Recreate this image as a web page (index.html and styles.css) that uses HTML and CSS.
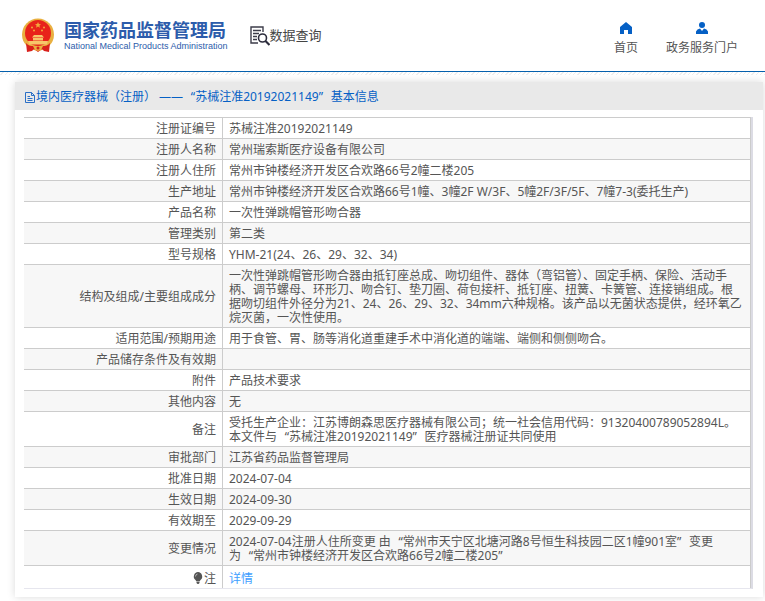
FILE: index.html
```html
<!DOCTYPE html>
<html lang="zh-CN">
<head>
    <meta charset="UTF-8">
    <meta name="viewport" content="width=device-width, initial-scale=1.0">
    <title>国家药品监督管理局 数据查询</title>
    <link rel="stylesheet" href="styles.css">
</head>
<body>
    <header class="header">
        <a class="logo" href="#">
            <svg class="emblem" viewBox="0 0 32 36" aria-hidden="true">
                <circle cx="16" cy="16.500" r="16" fill="#e9b040"/>
                <circle cx="16" cy="15" r="13" fill="#e8231a"/>
                <path d="M16 4l.9 2 2.100.2-1.600 1.400.5 2.100-1.900-1.100-1.900 1.100.5-2.100-1.600-1.400 2.100-.2z" fill="#f3a93c"/>
                <g fill="#f3a93c">
                    <circle cx="10" cy="9.500" r="1"/>
                    <circle cx="12" cy="12.500" r="1"/>
                    <circle cx="20" cy="12.500" r="1"/>
                    <circle cx="22" cy="9.500" r="1"/>
                </g>
                <path d="M12 17h8l2 2.500H10zM11 20h10v2.500H11zM6 23h20l-1 3.500H7z" fill="#f7c66a"/>
                <path d="M4 25c3 4 7 3 12 3s9 1 12-3l-1 9-5-1-2-2-4 3-4-3-2 2-5 1z" fill="#d9201c"/>
                <path d="M11 28h10l-2 4-3 1-3-1z" fill="#e9b040"/>
                <circle cx="16" cy="30" r="1.500" fill="#d9201c"/>
            </svg>
            <span class="logo-text">
                <span class="logo-cn">国家药品监督管理局</span>
                <span class="logo-en">National Medical Products Administration</span>
            </span>
        </a>
        <a class="search-title" href="#">
            <svg class="search-icon" viewBox="0 0 20 20" aria-hidden="true">
                <path d="M13 6V1H1v16h7M3 4.5h8M3 7.5h6M3 10.5h4M3 13.5h4" fill="none" stroke="#3d3d4a" stroke-width="1.4"/>
                <circle cx="12.5" cy="12" r="4" fill="#fff" stroke="#2c2c3c" stroke-width="1.6"/>
                <path d="M15.5 15l4 4" stroke="#2c2c3c" stroke-width="2.2"/>
            </svg>
            <span>数据查询</span>
        </a>
        <nav class="nav">
            <a href="#">
                <svg viewBox="0 0 12 12" aria-hidden="true"><path d="M6 0L12 5V12H8V8H4V12H0V5Z" fill="#0560c5"/></svg>
                <span>首页</span>
            </a>
            <a href="#">
                <svg viewBox="0 0 12 12" aria-hidden="true"><circle cx="6" cy="3" r="3" fill="#0560c5"/><path d="M0 12V9.500Q1 7 4 6.500L6 9L8 6.500Q11 7 12 9.500V12Z" fill="#0560c5"/></svg>
                <span>政务服务门户</span>
            </a>
        </nav>
    </header>
    <div class="stripe"></div>
    <main class="card">
        <h1 class="card-title">
            <svg viewBox="0 0 10 12" aria-hidden="true"><path d="M.5 1.500H6.500L9.500 4.500V11.500H.5ZM6.500 1.500V4.500H9.500M2.500 5.500H5M2.500 7.500H7.500M2.500 9.500H7.500" fill="none" stroke="#2b6fc6"/></svg>
            <span>境内医疗器械（注册） ——<span class="open">“</span>苏械注准20192021149<span class="close">”</span>基本信息</span>
        </h1>
        <div class="card-body">
            <table class="info">
                <tbody>
                    <tr><th scope="row">注册证编号</th><td>苏械注准20192021149</td></tr>
                    <tr><th scope="row">注册人名称</th><td>常州瑞索斯医疗设备有限公司</td></tr>
                    <tr><th scope="row">注册人住所</th><td>常州市钟楼经济开发区合欢路66号2幢二楼205</td></tr>
                    <tr><th scope="row">生产地址</th><td>常州市钟楼经济开发区合欢路66号1幢、3幢2F W/3F、5幢2F/3F/5F、7幢7-3(委托生产)</td></tr>
                    <tr><th scope="row">产品名称</th><td>一次性弹跳帽管形吻合器</td></tr>
                    <tr><th scope="row">管理类别</th><td>第二类</td></tr>
                    <tr><th scope="row">型号规格</th><td>YHM-21(24、26、29、32、34)</td></tr>
                    <tr><th scope="row">结构及组成/主要组成成分</th><td>一次性弹跳帽管形吻合器由抵钉座总成、吻切组件、器体（弯铝管）、固定手柄、保险、活动手柄、调节螺母、环形刀、吻合钉、垫刀圈、荷包接杆、抵钉座、扭簧、卡簧管、连接销组成。根据吻切组件外径分为21、24、26、29、32、34mm六种规格。该产品以无菌状态提供，经环氧乙烷灭菌，一次性使用。</td></tr>
                    <tr><th scope="row">适用范围/预期用途</th><td>用于食管、胃、肠等消化道重建手术中消化道的端端、端侧和侧侧吻合。</td></tr>
                    <tr><th scope="row">产品储存条件及有效期</th><td></td></tr>
                    <tr><th scope="row">附件</th><td>产品技术要求</td></tr>
                    <tr><th scope="row">其他内容</th><td>无</td></tr>
                    <tr><th scope="row">备注</th><td>受托生产企业：江苏博朗森思医疗器械有限公司；统一社会信用代码：91320400789052894L。<br>本文件与<span class="open">“</span>苏械注准20192021149<span class="close">”</span>医疗器械注册证共同使用</td></tr>
                    <tr><th scope="row">审批部门</th><td>江苏省药品监督管理局</td></tr>
                    <tr><th scope="row">批准日期</th><td>2024-07-04</td></tr>
                    <tr><th scope="row">生效日期</th><td>2024-09-30</td></tr>
                    <tr><th scope="row">有效期至</th><td>2029-09-29</td></tr>
                    <tr><th scope="row">变更情况</th><td>2024-07-04注册人住所变更 由<span class="open">“</span>常州市天宁区北塘河路8号恒生科技园二区1幢901室<span class="close">”</span>变更<br>为<span class="open">“</span>常州市钟楼经济开发区合欢路66号2幢二楼205<span class="close">”</span></td></tr>
                    <tr class="note"><th scope="row"><svg class="bulb" viewBox="0 0 10 12" aria-hidden="true"><path d="M5 0a4.500 4.500 0 0 1 2.500 8L6.500 9.500h-3L2.500 8A4.500 4.500 0 0 1 5 0ZM3.500 10h3v1l-1 1h-1l-1-1Z" fill="#555"/><path d="M2.500 4.500Q2.500 2.500 4.500 2" fill="none" stroke="#ccc" stroke-width=".8"/></svg>注</th><td><a href="#">详情</a></td></tr>
                </tbody>
            </table>
        </div>
    </main>
</body>
</html>
```

FILE: styles.css
```css
* {
    box-sizing: border-box;
}
body {
    margin: 0;
    background: #fff;
    color: #555;
    font-family: "Noto Sans", "Noto Sans CJK SC", sans-serif;
    font-size: 12px;
    line-height: 14px;
}
a {
    color: inherit;
    text-decoration: none;
}
.header {
    display: flex;
    align-items: center;
    height: 72px;
    padding: 0 27px 0 22px;
    border-bottom: 1px solid #0560ad;
}
.stripe {
    height: 3px;
    background: repeating-linear-gradient(135deg, #fff 0, #fff 2px, #eee 2px, #eee 3px);
}
.logo {
    display: flex;
    align-items: center;
    gap: 10px;
    color: #2c5cab;
}
.emblem {
    width: 32px;
    height: 36px;
}
.logo-text {
    display: flex;
    flex-direction: column;
}
.logo-cn {
    font-family: "Noto Sans CJK SC", sans-serif;
    font-size: 18px;
    font-weight: bold;
    line-height: 20px;
}
.logo-en {
    font-family: "Liberation Sans", sans-serif;
    font-size: 9px;
    line-height: 14px;
}
.search-title {
    display: flex;
    align-items: center;
    margin-left: 22px;
    font-size: 13px;
    color: #444;
}
.search-title span {
    padding-bottom: 2px;
}
.search-icon {
    width: 20px;
    height: 20px;
}
.nav {
    display: flex;
    gap: 28px;
    margin-left: auto;
    padding-top: 6px;
}
.nav a {
    display: flex;
    flex-direction: column;
    align-items: center;
    gap: 7px;
}
.nav svg {
    width: 12px;
    height: 12px;
}
.card {
    margin: 7px 2px 4px 15px;
    background: #fff;
    box-shadow: 0 0 8px rgba(0, 0, 0, 0.15);
}
.card-title {
    display: flex;
    align-items: center;
    height: 28px;
    margin: 0;
    padding: 2px 10px 0;
    background: #e9e9e9;
    color: #0560c5;
    font-size: 12px;
    font-weight: normal;
}
.card-title svg {
    width: 10px;
    height: 12px;
    margin-right: 1px;
}
/* full-width quotes */
.open,
.close {
    display: inline-block;
    width: 12px;
    text-align: right;
}
.close {
    text-align: left;
}
.card-body {
    padding: 7px 10px 8px 9px;
}
.info {
    width: 100%;
    table-layout: fixed;
    border-collapse: separate;
    border-spacing: 0;
    border-right: 2px solid #dcdce4;
    border-bottom: 1px solid #e6e6ee;
}
.info th,
.info td {
    height: 21px;
    padding: 4px 6px 2px;
    border-top: 1px solid #ccc;
    border-right: 1px solid #ccc;
    line-height: 14px;
    vertical-align: middle;
}
.info th {
    width: 199px;
    font-weight: normal;
    text-align: right;
}
.info td {
    text-align: left;
}
.info tr:nth-child(even) {
    background: #f7f7f7;
}
.info .note th,
.info .note td {
    height: 23px;
    padding: 6px 6px 2px;
}
.info .note a {
    color: #409eff;
}
.bulb {
    width: 10px;
    height: 12px;
    margin-right: 1px;
    vertical-align: -1px;
}
```
